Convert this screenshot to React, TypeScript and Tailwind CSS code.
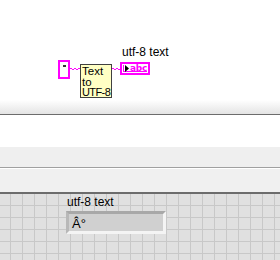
import React from "react";

const font = { fontFamily: '"Liberation Sans", Arial, sans-serif' };

function Wire({ x, y, w }: { x: number; y: number; w: number }) {
  let d = `M0 2`;
  for (let i = 0; i < w; i += 2) {
    d += ` L${i + 1} ${(i / 2) % 2 === 0 ? 1 : 3} L${i + 2} 2`;
  }
  return (
    <svg className="absolute" style={{ left: x, top: y }} width={w} height={4}>
      <path d={d} stroke="#ff00ff" strokeWidth={1} fill="none" />
    </svg>
  );
}

export default function App() {
  return (
    <div className="w-[280px] h-[260px] overflow-hidden flex flex-col bg-white text-black" style={font}>
      {/* Block diagram */}
      <div className="relative h-[100px] bg-white shrink-0">
        {/* string constant */}
        <div className="absolute left-[58px] top-[60px] w-[12px] h-[19px] border-2 border-[#ff00ff] bg-white flex justify-center">
          <div className="mt-[3px] w-[3px] h-[2px] bg-[#333]" />
        </div>
        <Wire x={70} y={67} w={10} />
        {/* function node */}
        <div className="absolute left-[80px] top-[64px] w-[32px] h-[34px] border border-[#404040] bg-[#ffffc4] text-[11.5px] leading-[10.5px] pl-[1px] pt-[1px] whitespace-nowrap">
          <div>Text</div>
          <div>to</div>
          <div className="text-[11px] tracking-[-0.6px]">UTF-8</div>
        </div>
        <Wire x={112} y={67} w={8} />
        {/* label */}
        <div className="absolute left-[122px] top-[45px] text-[12px] leading-[14px]">utf-8 text</div>
        {/* indicator */}
        <div className="absolute left-[120px] top-[62px] w-[30px] h-[13px] border-2 border-[#ff00ff] bg-white p-[1px]">
          <div className="w-full h-full border-l border-b border-[#ff00ff] flex items-center">
            <svg width="4" height="7" className="ml-[1px] shrink-0">
              <path d="M0 0 L4 3.5 L0 7 Z" fill="#000" />
            </svg>
            <span
              className="text-[9px] leading-[9px] font-bold text-[#ff00ff] ml-[1px] tracking-[-0.3px] whitespace-nowrap"
              style={{ fontFamily: '"DejaVu Sans", sans-serif' }}
            >
              abc
            </span>
          </div>
        </div>
      </div>
      <div className="h-[14px] shrink-0 bg-gradient-to-b from-white to-[#e4e4e4]" />
      <div className="h-[1px] shrink-0 bg-[#6c6c6c]" />
      <div className="h-[32px] shrink-0 bg-white" />
      <div className="h-[20px] shrink-0 bg-[#efefef]" />
      <div className="h-[1px] shrink-0 bg-[#a0a0a0]" />
      <div className="h-[1px] shrink-0 bg-white" />
      <div className="h-[23px] shrink-0 bg-[#f0f0f0]" />
      <div className="h-[2px] shrink-0 bg-[#6c6c6c]" />
      {/* Front panel */}
      <div
        className="relative flex-1 bg-[#e0e0e0]"
        style={{
          backgroundImage:
            "linear-gradient(to right, #c8c8c8 1px, transparent 1px), linear-gradient(to bottom, #c8c8c8 1px, transparent 1px)",
          backgroundSize: "12px 12px",
          backgroundPosition: "10px 11px",
        }}
      >
        <div className="absolute left-[67px] top-[1px] text-[12px] leading-[14px]">utf-8 text</div>
        <div
          className="absolute left-[66px] top-[17px] w-[100px] h-[23px] bg-[#d0d0d0] pl-[3px] pt-[2px] text-[13px] leading-[15px]"
          style={{
            borderStyle: "solid",
            borderWidth: "3px",
            borderColor: "#a8a8a8 #f4f4f4 #f4f4f4 #b8b8b8",
          }}
        >
          Â°
        </div>
      </div>
    </div>
  );
}
